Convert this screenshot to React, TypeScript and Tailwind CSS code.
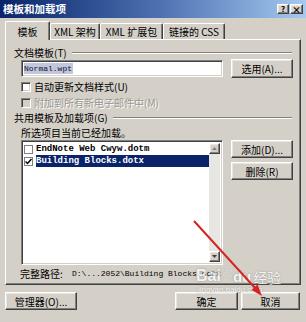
import React from "react";

const cjk = "font-['Noto_Sans_CJK_SC','Liberation_Sans',sans-serif]";
const mono = "font-['Liberation_Mono','Noto_Sans_CJK_SC',monospace]";

const raised =
  "border border-t-white border-l-white border-r-[#404040] border-b-[#404040] shadow-[inset_-1px_-1px_0_#808080,inset_1px_1px_0_#e8e6e2]";
const sunken =
  "border border-t-[#808080] border-l-[#808080] border-r-white border-b-white shadow-[inset_1px_1px_0_#404040,inset_-1px_-1px_0_#d4d0c8]";

function Btn({ label, className = "" }: { label: string; className?: string }) {
  return (
    <div className={`flex items-center justify-center bg-[#d4d0c8] text-[10px] text-black ${raised} ${className}`}>
      {label}
    </div>
  );
}

function GroupHead({ label }: { label: string }) {
  return (
    <div className="flex items-center gap-[5px] pl-[8px] pr-[8px] h-[12px]">
      <span className="text-[10px] leading-none whitespace-nowrap">{label}</span>
      <div className="flex-1 flex flex-col">
        <div className="h-px bg-[#808080]" />
        <div className="h-px bg-white" />
      </div>
    </div>
  );
}

function Check({ disabled = false }: { disabled?: boolean }) {
  return <div className={`w-[10px] h-[10px] ${sunken} ${disabled ? "bg-[#d4d0c8]" : "bg-white"}`} />;
}

function Tab({ label, active = false, className = "" }: { label: string; active?: boolean; className?: string }) {
  return (
    <div
      className={`flex items-center justify-center text-[10px] whitespace-nowrap border-t border-l border-t-white border-l-white border-r border-r-[#404040] shadow-[inset_-1px_0_0_#808080] rounded-t-[2px] ${
        active ? "h-[19px] relative z-10 bg-[#d4d0c8] -mb-px" : "h-[16px] mt-[3px]"
      } ${className}`}
    >
      {label}
    </div>
  );
}

export default function App() {
  return (
    <div className={`relative w-[306px] h-[322px] overflow-hidden bg-[#d4d0c8] text-black ${cjk}`}>
      {/* title bar */}
      <div className="h-[18px] bg-linear-to-r from-[#0a246a] via-[#4a6eae] to-[#a6caf0] flex items-center justify-between pl-[3px] pr-[3px]">
        <span className="text-white text-[10.5px] font-bold leading-none">模板和加载项</span>
        <div className="flex gap-px">
          <div className={`w-[12px] h-[10px] bg-[#d4d0c8] ${raised} flex items-center justify-center text-[8px] font-bold leading-none`}>?</div>
          <div className={`w-[13px] h-[10px] bg-[#d4d0c8] ${raised} flex items-center justify-center text-[9px] font-bold leading-none`}>×</div>
        </div>
      </div>

      {/* tabs */}
      <div className="flex items-end pl-[5px] mt-[2px] h-[19px]">
        <Tab label="模板" active className="w-[45px]" />
        <Tab label="XML 架构" className="w-[50px]" />
        <Tab label="XML 扩展包" className="w-[63px]" />
        <Tab label="链接的 CSS" className="w-[62px]" />
      </div>

      {/* panel */}
      <div className="ml-[5px] w-[296px] h-[246px] border border-t-white border-l-white border-r-[#404040] border-b-[#404040] shadow-[inset_-1px_-1px_0_#808080] pt-[7px]">
        <GroupHead label="文档模板(T)" />
        <div className="flex items-center pl-[15px]">
          <div className={`w-[202px] h-[17px] bg-white ${sunken} flex items-center pl-[2px]`}>
            <span className={`${mono} text-[8px] leading-[11px] bg-[#c3c7dc] text-[#101030] pr-px`}>Normal.wpt</span>
          </div>
          <Btn label="选用(A)..." className="ml-[8px] w-[62px] h-[19px]" />
        </div>

        <div className="flex items-center gap-[3px] pl-[15px] mt-[3px] h-[12px]">
          <Check />
          <span className="text-[10px] leading-none">自动更新文档样式(U)</span>
        </div>
        <div className="flex items-center gap-[3px] pl-[15px] mt-[4px] h-[12px]">
          <Check disabled />
          <span className="text-[10px] leading-none text-[#9a968f] [text-shadow:1px_1px_0_#ffffff]">附加到所有新电子邮件中(M)</span>
        </div>

        <div className="mt-[3px]">
          <GroupHead label="共用模板及加载项(G)" />
        </div>
        <div className="pl-[15px] mt-[3px] text-[10px] leading-[12px]">所选项目当前已经加载。</div>

        <div className="flex pl-[15px] mt-[1px]">
          <div className={`relative w-[202px] h-[125px] bg-white ${sunken} flex`}>
            <div className="flex-1 pt-[2px] pl-[2px]">
              <div className="flex items-center h-[12px]">
                <div className="w-[9px] h-[9px] border border-[#808080] bg-white mr-[3px]" />
                <span className={`${mono} text-[9px] font-bold leading-none`}>EndNote Web Cwyw.dotm</span>
              </div>
              <div className="flex items-center h-[12px]">
                <div className="w-[9px] h-[9px] border border-[#808080] bg-white mr-[3px] flex items-center justify-center">
                  <svg width="7" height="7" viewBox="0 0 7 7">
                    <path d="M0.5 3.5 L2.5 5.5 L6.5 1" stroke="#000" strokeWidth="1.5" fill="none" />
                  </svg>
                </div>
                <span className={`${mono} flex-1 h-[12px] text-[9px] font-bold leading-[12px] bg-[#0a246a] text-white`}>Building Blocks.dotx</span>
              </div>
            </div>
            <div className="w-[11px] bg-[#e8e6e2] flex flex-col justify-between mt-[2px] mb-[2px] mr-[2px]">
              <div className={`h-[11px] bg-[#d4d0c8] ${raised} flex items-center justify-center`}>
                <svg width="5" height="3" viewBox="0 0 5 3"><path d="M0 3 L2.5 0 L5 3Z" fill="#808080" /></svg>
              </div>
              <div className={`h-[11px] bg-[#d4d0c8] ${raised} flex items-center justify-center`}>
                <svg width="5" height="3" viewBox="0 0 5 3"><path d="M0 0 L2.5 3 L5 0Z" fill="#404040" /></svg>
              </div>
            </div>
          </div>
          <div className="ml-[8px] flex flex-col gap-[4px]">
            <Btn label="添加(D)..." className="w-[62px] h-[18px]" />
            <Btn label="删除(R)" className="w-[62px] h-[18px]" />
          </div>
        </div>

        <div className="flex items-center pl-[14px] mt-[3px] h-[12px]">
          <span className="text-[10px] leading-none w-[52px]">完整路径:</span>
          <span className={`${mono} text-[8px] leading-none`}>D:\...2052\Building Blocks.dotx</span>
        </div>
      </div>

      {/* bottom buttons */}
      <div className="flex mt-[7px] pl-[5px]">
        <Btn label="管理器(O)..." className="w-[72px] h-[18px]" />
        <Btn label="确定" className="ml-[98px] w-[63px] h-[18px]" />
        <Btn label="取消" className="ml-[3px] w-[59px] h-[18px]" />
      </div>

      {/* watermark */}
      <div className="absolute left-[196px] top-[267px] pointer-events-none opacity-75">
        <div className="flex items-end gap-[1px] text-white [text-shadow:0_0_2px_#7a7a7a]">
          <span className="font-['Liberation_Sans',sans-serif] font-bold text-[16px] leading-none">Bai</span>
          <span className="text-[10px] leading-none mb-[7px]">❀</span>
          <span className="font-['Liberation_Sans',sans-serif] font-bold text-[15px] leading-none">du</span>
          <span className="text-[14px] leading-none ml-[1px]">经验</span>
        </div>
        <div className="text-white text-[8px] leading-none mt-[2px] ml-[2px] font-['Liberation_Sans',sans-serif] [text-shadow:0_0_2px_#7a7a7a]">
          jingyan.baidu.com
        </div>
      </div>

      {/* red arrow */}
      <svg className="absolute left-0 top-0 pointer-events-none" width="306" height="322" viewBox="0 0 306 322">
        <line x1="194" y1="221" x2="256" y2="289" stroke="#d42424" strokeWidth="2" />
        <polygon points="262,296 251.5,290 257.5,284.5" fill="#d42424" />
      </svg>
    </div>
  );
}
